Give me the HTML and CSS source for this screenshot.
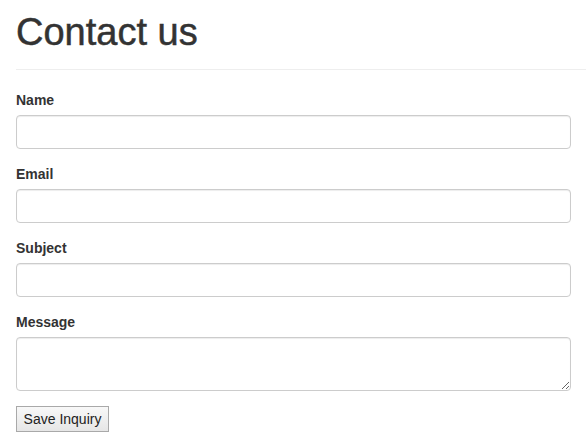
FILE: index.html
```html
<!DOCTYPE html>
<html>
<head>
<meta charset="utf-8">
<title>Contact us</title>
<link rel="stylesheet" href="styles.css">
</head>
<body>
<div class="page">
  <header class="page-header">
    <h1 class="title">Contact us</h1>
  </header>
  <form class="form">
    <div class="form-group">
      <label class="label" for="name">Name</label>
      <input class="control" id="name" type="text">
    </div>
    <div class="form-group">
      <label class="label" for="email">Email</label>
      <input class="control" id="email" type="text">
    </div>
    <div class="form-group">
      <label class="label" for="subject">Subject</label>
      <input class="control" id="subject" type="text">
    </div>
    <div class="form-group">
      <label class="label" for="message">Message</label>
      <textarea class="control textarea" id="message" rows="2"></textarea>
    </div>
    <button type="button" class="btn">Save Inquiry</button>
  </form>
</div>
</body>
</html>
```
FILE: styles.css
```css
* { box-sizing: border-box; }
html, body { margin: 0; padding: 0; background: #fff; }
body {
  font-family: "Liberation Sans", Arial, Helvetica, sans-serif;
  color: #333;
  font-size: 14px;
  line-height: 20px;
}
.page {
  padding-left: 16px;
}
.page-header {
  padding-top: 11px;
  border-bottom: 1px solid #eee;
  margin-bottom: 20px;
}
.title {
  margin: 0 0 16px 0;
  font-size: 38px;
  line-height: 42px;
  font-weight: 500;
  color: #333;
  -webkit-text-stroke: 0.5px #333;
}
.form {
  margin-right: 15px;
  display: flex;
  flex-direction: column;
  align-items: flex-start;
}
.form-group {
  display: flex;
  flex-direction: column;
  width: 100%;
  margin-bottom: 15px;
}
.label {
  font-weight: bold;
  font-size: 14px;
  line-height: 20px;
  margin-bottom: 5px;
  color: #333;
}
.control {
  display: block;
  width: 100%;
  height: 34px;
  padding: 6px 12px;
  font-family: inherit;
  font-size: 14px;
  line-height: 20px;
  color: #555;
  background: #fff;
  border: 1px solid #ccc;
  border-radius: 4px;
  box-shadow: inset 0 1px 1px rgba(0,0,0,0.075);
  margin: 0;
}
.textarea {
  height: 54px;
  resize: vertical;
}
.btn {
  width: 93px;
  height: 26px;
  margin: 0;
  padding: 0 6px;
  font-family: inherit;
  font-size: 14px;
  line-height: 20px;
  color: #222;
  background: linear-gradient(#f8f8f8, #e6e6e6);
  border: 1px solid #a9a9a9;
  border-radius: 0;
}
```
